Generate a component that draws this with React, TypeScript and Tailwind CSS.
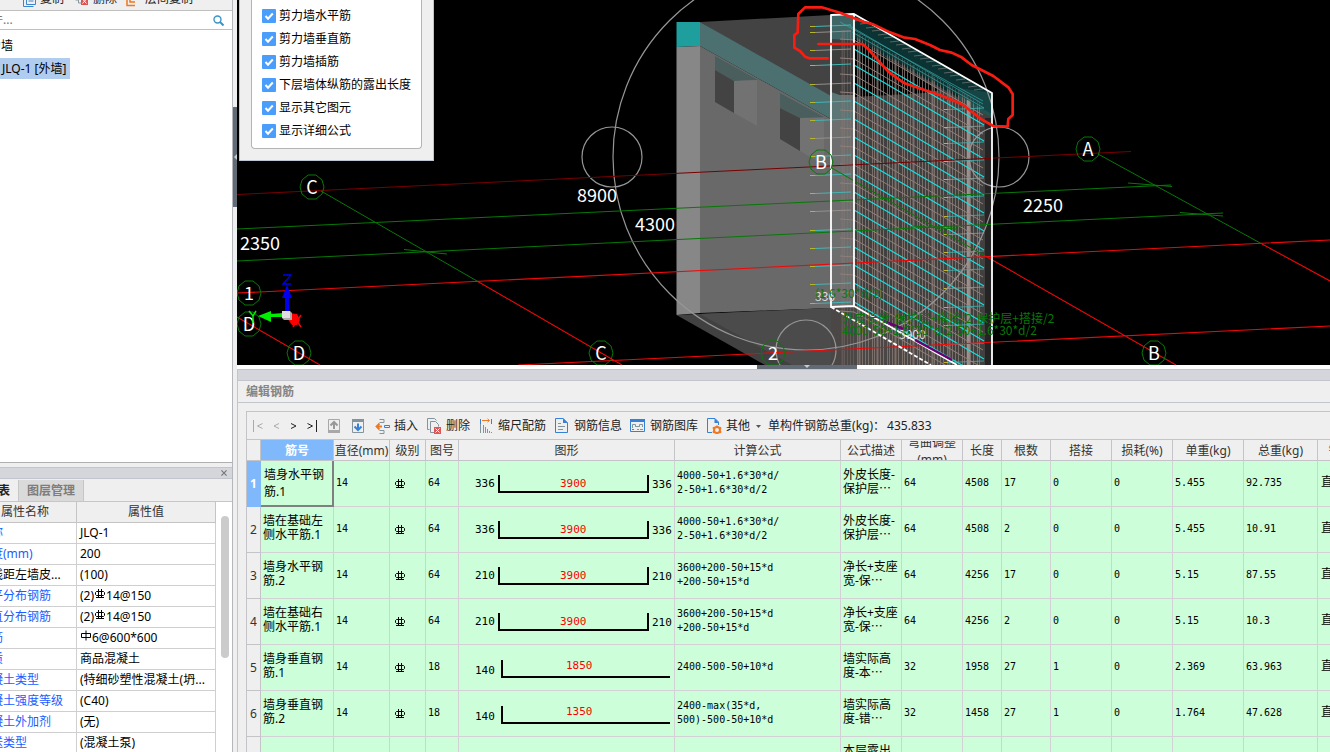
import React from "react";

const UI = "font-['Noto_Sans','Noto_Sans_CJK_SC',sans-serif]";
const MONO = "font-['DejaVu_Sans_Mono','Noto_Sans_CJK_SC',monospace]";

function RebarMark({ plain = false, className = "" }: { plain?: boolean; className?: string }) {
  return (
    <svg className={`inline-block h-3 w-[10px] shrink-0 ${className}`} viewBox="0 0 10 12" fill="none" stroke="#000">
      {plain ? (
        <path d="M.5 3.5h9v4h-9zM5 .5v10" />
      ) : (
        <path d="M1.5 3.5h7l1 1v2l-1 1h-7l-1-1v-2zM3.5 1v9M6.5 1v9M1 9.5h8" />
      )}
    </svg>
  );
}

const checks = ["剪力墙水平筋", "剪力墙垂直筋", "剪力墙插筋", "下层墙体纵筋的露出长度", "显示其它图元", "显示详细公式"];

function DisplayPopup() {
  return (
    <div className="absolute left-[2px] top-0 h-[161px] w-[195px] border border-t-0 border-[#bcc6d2] bg-[#efefef] px-[11px] pb-3">
      <div className="flex h-[149px] flex-col justify-end rounded-b border border-t-0 border-[#b4b4b4] bg-white pb-[6px] pl-[10px]">
        {checks.map((c) => (
          <label key={c} className="flex h-[23px] shrink-0 items-center gap-[3px] whitespace-nowrap text-xs text-black">
            <span className="relative block size-[14px]">
              <input type="checkbox" defaultChecked className="block size-[14px] appearance-none rounded-[1px] bg-[#4b9dfb]" />
              <svg className="pointer-events-none absolute inset-0 size-[14px]" viewBox="0 0 14 14" fill="none" stroke="#fff" strokeWidth="2">
                <path d="M3.5 7l2.5 2.7L10.8 4.5" />
              </svg>
            </span>
            {c}
          </label>
        ))}
      </div>
    </div>
  );
}

const leftBars = [26, 32, 50, 65, 84, 102, 120, 138, 156, 175, 193, 211, 230, 248, 266, 284, 303];
const grayBars = new Set([32, 50, 84, 138, 211]);
const rightBars = [109, 127, 143, 161, 179, 197, 216, 234, 252, 270, 288, 307, 325, 344, 362];
const stripes = Array.from({ length: 47 }, (_, i) => 841 + i * 3 + ((i * 7) % 5 === 0 ? 1 : 0));
const cyanStarts = [30, 49, 65, 83, 101, 119, 137, 155, 174, 192, 210, 229, 247, 265, 283, 302];

const labels: [string, number, number][] = [
  ["C", 312, 187], ["1", 249, 293], ["D", 249, 324], ["D", 299, 353], ["C", 601, 353],
  ["2", 773, 353], ["B", 821, 162], ["B", 1154, 353], ["A", 1088, 149],
];

function Scene() {
  return (
    <svg
      className="block h-full w-full bg-black font-['Noto_Sans_CJK_SC',sans-serif]"
      viewBox="237 0 1093 365"
      preserveAspectRatio="xMinYMin slice"
      fill="none"
    >
      <defs>
        <clipPath id="wallLines">
          <path d="M831 0H992V365H831z" />
        </clipPath>
      </defs>

      {/* room volume */}
      <path d="M700 22L831 15V100z" fill="#434343" />
      <path d="M700 46L831 119V308L700 313z" fill="#696969" />
      <path d="M676.500 22L700 22V46L676.500 47z" fill="#1f9e9e" />
      <path d="M700 22L831 96V119L700 46z" fill="#4c7070" />
      <path d="M676.500 47L700 46V313L676.500 315z" fill="#878787" />
      <path d="M676.500 315L831 308V365H765z" fill="#414141" />
      <path d="M700 314L831 308V365H792z" fill="#4b4b4b" />
      <path d="M715 56L758 80L734 81L715 70z" fill="#4a5e5e" />
      <path d="M715 70L734 81V113L715 102z" fill="#434343" />
      <path d="M734 81L757 80V126L734 113z" fill="#727272" />
      <path d="M780 93L824 117L800 118L780 108z" fill="#4a5e5e" />
      <path d="M780 108L800 118V151L780 139z" fill="#434343" />
      <path d="M800 118H824V165L800 151z" fill="#727272" />

      {/* wall body */}
      <path d="M831 15L854 14L992 93V365H831V307z" fill="#423f3f" />
      <path d="M831 15L854 14V306L831 307z" fill="#6e6e6e" />
      <path d="M831 15L854 14V40L831 39z" fill="#3f6666" />
      <path d="M831 39L854 40V95H831z" fill="#3d3d3d" />
      <path d="M831 92L854 100V120L831 119z" fill="#5c7575" />
      <path d="M854 38L940 90L925 93L854 97z" fill="#030303" />
      <path d="M831 308L854 306L957 365H831z" fill="#4c4747" />
      <path d="M854 14L992 93V117L854 38z" fill="#0b2b2b" />
      <path d="M958 88L992 93V118L958 99z" fill="#235252" />
      <path d="M985 118H992V365H985z" fill="#242424" />
      <g stroke="#8b7c76">
        {stripes.map((x, i) => (
          <path
            key={x}
            opacity={x < 854 ? 0.35 : 0.78}
            strokeWidth={i % 6 === 0 ? 2 : 1}
            d={`M${x + 0.5} ${Math.round(Math.max(30, 31 + (x - 854) * 0.57))}V365`}
          />
        ))}
      </g>
      <g clipPath="url(#wallLines)">
        <path d="M968.500 100V365" stroke="#a89c96" strokeWidth="3" opacity=".8" />
        <g stroke="#8f807b">
          {cyanStarts.map((y) => (
            <path key={y} d={`M840 ${y + 9}L854 ${y + 10}L983 ${y + 85}`} />
          ))}
        </g>
        <path d="M854 14L992 93V114L854 36z" fill="#0d3a3a" opacity=".55" />
        <g stroke="#16e0e0" strokeWidth="1.200">
          {cyanStarts.slice(1).map((y) => (
            <path key={y} d={`M854 ${y}L984 ${y + 76}`} />
          ))}
        </g>
        <g stroke="#3aa5a5" opacity=".7">
          <path d="M840 22L983 101M850 26L983 104M852 32L984 108" />
        </g>
        <g stroke="#8d8682">
          {Array.from({ length: 21 }, (_, i) => (
            <path key={i} opacity=".6" d={`M${854 + i * 6} ${21 + Math.round(i * 3.45)}l9 -1`} />
          ))}
        </g>
      </g>
      {leftBars.map((y) => (
        <g key={y}>
          <path d={`M810 ${y}.5h5`} stroke="#b5b52c" />
          <path d={`M815 ${y + 0.5}L851 ${y - 1}`} stroke={grayBars.has(y) ? "#958e8a" : "#45b5b5"} />
        </g>
      ))}
      {rightBars.map((y, i) => (
        <g key={y}>
          <path d={`M944 ${y}.5h4`} stroke="#c5b52c" />
          <path d={`M948 ${y + 0.5}L984 ${y - 1}`} opacity=".8" stroke={i % 3 === 1 ? "#8fa09e" : "#3fb2b2"} />
        </g>
      ))}

      {/* gizmo sphere */}
      <g stroke="#969696" strokeWidth="1.200">
        <circle cx="806" cy="157" r="193" />
        <circle cx="612" cy="157" r="30" />
        <circle cx="999" cy="157" r="30" />
        <circle cx="806" cy="350" r="30" />
      </g>

      {/* axes grid */}
      <path d="M237 194.500L1131 151.500" stroke="#780000" />
      <g stroke="#087808">
        <path d="M237 229L1171 185M237 261L1223 213" />
        <path d="M321 191L477 281M830 167L987 257M1098 154L1262 244" />
        <path d="M404 249.500L447 254M1128 183L1172 186.500M1180 212.500L1223 216M912 226L957 229" />
      </g>
      <g stroke="#ee0808" strokeWidth="1.100">
        <path d="M237 293L1330 240M518 365L1330 326M237 317L320 365M477 281L622 365M987 257L1176 365M1262 244L1330 281" />
      </g>

      {/* wall outline */}
      <g stroke="#fff" strokeWidth="1.800" strokeLinejoin="round">
        <path d="M831 307V15L854 14V306zM854 14L992 93V365M854 306L957 365" />
        <path d="M831 307L931 365" strokeDasharray="4 2" />
      </g>
      <path d="M884 321L903 329M915 340L952 360" stroke="#6b0070" strokeWidth="2.500" />

      {labels.map(([t, x, y]) => (
        <g key={`${t}${x}`}>
          <path
            transform={`translate(${x} ${y})`}
            d="M-4 -12H4L10 -7L12 0L10 7L4 12H-4L-10 7L-12 0L-10 -7z"
            stroke="#087808"
          />
          <text x={x} y={y + 7} textAnchor="middle" fontSize="18" fill="#fff">{t}</text>
        </g>
      ))}
      <g fill="#fff" fontSize="18">
        <text x="240" y="250">2350</text>
        <text x="577" y="202">8900</text>
        <text x="635" y="231">4300</text>
        <text x="1023" y="212">2250</text>
      </g>
      <g fontSize="12">
        <text x="815" y="301" fill="#ddd">336</text>
        <text x="899" y="339" fill="#ddd">3900</text>
      </g>
      <g fill="#087808" fontSize="12">
        <text x="815" y="298">(1.6*30*d/2)</text>
        <text x="842" y="323">外皮长度-保护层+搭接/2-保护层+搭接/2</text>
        <text x="842" y="335">4000-50+1.6*30*d/2-50+1.6*30*d/2</text>
      </g>

      {/* orientation triad */}
      <path d="M285 296h4v16h-4zM287 285l5 13h-10z" fill="#00e" />
      <path d="M270 314l14-1v4h-14zM258 316l13-5v11z" fill="#0e0" />
      <path d="M288 313l9 1 3 6-3 5h-5l-5-7z" fill="#f00" />
      <path d="M293 315l8 12M301 315l-8 12" stroke="#f00" strokeWidth="1.500" />
      <path d="M283 275h8l-8 9h8" stroke="#00e" strokeWidth="1.300" />
      <path d="M249 311l4 5 3-5M253 316v7" stroke="#0e0" strokeWidth="1.500" />
      <path d="M282 311h8v7h-8z" fill="#ddd" />
      <path d="M290 311l2 2v7h-8l-2-2h8z" fill="#aaa" />

      {/* freehand markup */}
      <path
        transform="translate(780 0) scale(.3333)"
        d="M143 175H88L75 170L60 153L43 143V105L53 98L55 42L75 22H125L180 38L250 65L280 73L330 97L370 112L405 117L450 135L480 150L515 158L545 172L575 195L640 228L685 262L698 282V345L685 357L683 380L640 378L605 358L545 312L480 285L440 272L370 248L325 215L265 148L247 132H115"
        stroke="#f91c10"
        strokeWidth="8"
        strokeLinecap="round"
        strokeLinejoin="round"
      />
    </svg>
  );
}

const propRows: [string, React.ReactNode, boolean?][] = [
  ["名称", "JLQ-1"],
  ["厚度(mm)", "200"],
  ["轴线距左墙皮...", "(100)", true],
  ["水平分布钢筋", <>(2)<RebarMark className="mx-px mb-1" />14@150</>],
  ["垂直分布钢筋", <>(2)<RebarMark className="mx-px mb-1" />14@150</>],
  ["拉筋", <><RebarMark plain className="mx-px mb-1" />6@600*600</>],
  ["材质", "商品混凝土"],
  ["混凝土类型", "(特细砂塑性混凝土(坍..."],
  ["混凝土强度等级", "(C40)"],
  ["混凝土外加剂", "(无)"],
  ["泵送类型", "(混凝土泵)"],
];

function LeftDock() {
  return (
    <aside className="flex w-[233px] shrink-0 justify-end overflow-hidden border-r border-[#b4b8be]">
      <div className="flex h-full w-[292px] shrink-0 flex-col">
        <div className="flex h-[10px] shrink-0 items-end overflow-hidden pb-[3px] pl-[24px] text-xs leading-4">
          <button className="w-[46px] text-left">新建▾</button>
          <button className="ml-[12px] flex shrink-0 items-end gap-1">
            <svg className="size-[14px]" viewBox="0 0 14 14" fill="none" stroke="#3d84cf"><path d="M4.500 .5h9v11h-9zM1.500 4v9.500h10M6.500 5h5M6.500 8h5" /></svg>
            复制
          </button>
          <button className="ml-[9px] flex shrink-0 items-end gap-1">
            <svg className="size-4" viewBox="0 0 16 16" fill="none" stroke="#8b959b"><path d="M2.500 1v8h3M5.500 3v9h4" /><path d="M8 6h7v8H8z" fill="#d95757" stroke="none" /><path d="M9.500 8l4 4.500M13.500 8l-4 4.500" stroke="#fff" /></svg>
            删除
          </button>
          <button className="ml-[9px] flex shrink-0 items-end gap-[9px]">
            <svg className="h-[14px] w-[10px]" viewBox="0 0 10 14" fill="none" stroke="#f07820" strokeWidth="1.500"><path d="M1 1v11.500h8M4 1v8h5" /></svg>
            层间复制
          </button>
        </div>
        <div className="flex h-5 shrink-0 items-center border-y border-[#bfbfbf] bg-white pr-2">
          <input
            aria-label="搜索构件"
            placeholder="搜索构件..."
            className="ml-[15px] min-w-0 flex-1 bg-transparent text-xs outline-none placeholder:text-[#777]"
          />
          <button aria-label="搜索">
            <svg className="size-[11px]" viewBox="0 0 11 11" fill="none" stroke="#3b93c9"><circle cx="4.500" cy="4.500" r="3.500" strokeWidth="1.400" /><path d="M7 7l3.500 3.500" strokeWidth="2" /></svg>
          </button>
        </div>
        <div className="flex min-h-0 flex-1 flex-col items-start border-b border-[#b0b0b0] bg-white pl-[37px] pt-1 text-xs text-black">
          <div className="flex h-6 items-center">剪力墙</div>
          <button className="ml-[17px] flex h-[21px] items-center bg-[#b0cdef] pl-2 pr-1">JLQ-1 [外墙]</button>
        </div>

        <section className="mt-1 flex h-[285px] shrink-0 flex-col border-t border-[#c2c6cc]">
          <div className="flex h-[11px] shrink-0 items-center justify-end border-b border-[#c2c6cc] bg-[#d4d6db] pr-[5px]">
            <button aria-label="关闭">
              <svg className="size-[6px]" viewBox="0 0 7 7" stroke="#777" strokeWidth="1.400"><path d="M.5 .5l6 6M6.500 .5l-6 6" /></svg>
            </button>
          </div>
          <div className="flex h-[23px] shrink-0 border-b border-[#c6c6c6] pt-px text-xs font-bold">
            <button className="w-[78px] pr-2 text-right text-[#222]">属性列表</button>
            <button className="border-x border-[#c6c6c6] bg-[#dadada] px-2 text-[#7d7d7d]">图层管理</button>
          </div>
          <div className="flex min-h-0 flex-1 items-start overflow-hidden bg-white">
            <table className="w-[276px] table-fixed border-separate border-spacing-0 whitespace-nowrap text-xs">
              <colgroup>
                <col className="w-[34px]" />
                <col className="w-[103px]" />
                <col />
              </colgroup>
              <thead>
                <tr className="h-[21px] bg-[#efefef] text-[#333]">
                  <th className="border-b border-r border-[#c4c4c4] p-0" />
                  <th className="border-b border-r border-[#c4c4c4] p-0 font-normal">属性名称</th>
                  <th className="border-b border-r border-[#c4c4c4] p-0 font-normal">属性值</th>
                </tr>
              </thead>
              <tbody>
                {propRows.map(([name, value, plain], i) => (
                  <tr key={name} className="h-[21px]">
                    <td className="border-b border-r border-[#cfcfcf] bg-[#efefef] p-0 text-center">{i + 1}</td>
                    <td className={`overflow-hidden border-b border-r border-[#cfcfcf] py-0 pl-[5px] pr-0 leading-4 ${plain ? "text-black" : "text-[#1a5cff]"}`}>{name}</td>
                    <td className="overflow-hidden border-b border-r border-[#cfcfcf] py-0 pl-[3px] pr-0 leading-4 text-black">
                      <span className="flex items-center">{value}</span>
                    </td>
                  </tr>
                ))}
              </tbody>
            </table>
            <div className="ml-[5px] mt-[14px] h-[142px] w-2 rounded-full bg-[#cbcbcb]" />
          </div>
        </section>
      </div>
    </aside>
  );
}

type Bar = { name: string[]; no: string; left: string; mid: string; right?: string; formula: string[]; desc: string[]; adj: string; len: string; count: string; lap: string; unit: string; total: string };

const bars: Bar[] = [
  { name: ["墙身水平钢", "筋.1"], no: "64", left: "336", mid: "3900", right: "336", formula: ["4000-50+1.6*30*d/", "2-50+1.6*30*d/2"], desc: ["外皮长度-", "保护层⋯"], adj: "64", len: "4508", count: "17", lap: "0", unit: "5.455", total: "92.735" },
  { name: ["墙在基础左", "侧水平筋.1"], no: "64", left: "336", mid: "3900", right: "336", formula: ["4000-50+1.6*30*d/", "2-50+1.6*30*d/2"], desc: ["外皮长度-", "保护层⋯"], adj: "64", len: "4508", count: "2", lap: "0", unit: "5.455", total: "10.91" },
  { name: ["墙身水平钢", "筋.2"], no: "64", left: "210", mid: "3900", right: "210", formula: ["3600+200-50+15*d", "+200-50+15*d"], desc: ["净长+支座", "宽-保⋯"], adj: "64", len: "4256", count: "17", lap: "0", unit: "5.15", total: "87.55" },
  { name: ["墙在基础右", "侧水平筋.1"], no: "64", left: "210", mid: "3900", right: "210", formula: ["3600+200-50+15*d", "+200-50+15*d"], desc: ["净长+支座", "宽-保⋯"], adj: "64", len: "4256", count: "2", lap: "0", unit: "5.15", total: "10.3" },
  { name: ["墙身垂直钢", "筋.1"], no: "18", left: "140", mid: "1850", formula: ["2400-500-50+10*d"], desc: ["墙实际高", "度-本⋯"], adj: "32", len: "1958", count: "27", lap: "1", unit: "2.369", total: "63.963" },
  { name: ["墙身垂直钢", "筋.2"], no: "18", left: "140", mid: "1350", formula: ["2400-max(35*d,", "500)-500-50+10*d"], desc: ["墙实际高", "度-错⋯"], adj: "32", len: "1458", count: "27", lap: "1", unit: "1.764", total: "47.628" },
];

function BarShape({ left, mid, right }: { left: string; mid: string; right?: string }) {
  return (
    <svg className={`block h-[45px] w-[215px] ${MONO}`} viewBox="0 0 215 45" fontSize="11">
      {right ? (
        <path d="M40 14V31H189V14" fill="none" stroke="#000" strokeWidth="2" />
      ) : (
        <path d="M43 15V32H211" fill="none" stroke="#000" strokeWidth="2" />
      )}
      <text x="16" y={right ? 26 : 29}>{left}</text>
      <text x={right ? 101 : 107} y={right ? 26 : 24} fill="#f00">{mid}</text>
      {right && <text x="193" y="27">{right}</text>}
    </svg>
  );
}

const head = "h-[21px] border-b border-r border-[#c4c4c8] bg-[#efefef] px-0 pb-0 pt-px font-normal leading-4 overflow-hidden";
const cell = "h-[46px] border-b border-r border-[#d3d0d6] py-0 pl-[2px] pr-0 overflow-hidden";
const num = `${cell} pb-px text-[10px] ${MONO}`;
const pair = `${cell} text-xs leading-[14px]`;

function Lines({ items }: { items: string[] }) {
  return <>{items.map((t) => <div key={t}>{t}</div>)}</>;
}

function BarTable() {
  return (
    <table className="w-[1141px] shrink-0 table-fixed border-separate border-spacing-0 whitespace-nowrap text-xs text-black">
      <colgroup>
        <col className="w-[14px]" /><col className="w-[73px]" /><col className="w-[56px]" /><col className="w-[36px]" />
        <col className="w-[33px]" /><col className="w-[216px]" /><col className="w-[166px]" /><col className="w-[61px]" />
        <col className="w-[61px]" /><col className="w-[39px]" /><col className="w-[49px]" /><col className="w-[61px]" />
        <col className="w-[61px]" /><col className="w-[71px]" /><col className="w-[74px]" /><col className="w-[70px]" />
      </colgroup>
      <thead>
        <tr className="text-[#333]">
          <th className={head} />
          <th className="h-[21px] border-b border-r border-[#c4c4c8] bg-[#7fb9fb] px-0 pb-0 pt-px font-bold leading-4 text-white">筋号</th>
          <th className={head}>直径(mm)</th>
          <th className={head}>级别</th>
          <th className={head}>图号</th>
          <th className={head}>图形</th>
          <th className={head}>计算公式</th>
          <th className={head}>公式描述</th>
          <th className={head}>
            <div className="flex h-[19px] flex-col justify-center overflow-hidden leading-[17px]"><span>弯曲调整</span><span>(mm)</span></div>
          </th>
          {["长度", "根数", "搭接", "损耗(%)", "单重(kg)", "总重(kg)", "钢筋归类"].map((h) => (
            <th key={h} className={head}>{h}</th>
          ))}
        </tr>
      </thead>
      <tbody className="bg-[#ccffd9]">
        {bars.map((b, i) => (
          <tr key={i}>
            <th className={i === 0 ? "border-b border-r border-[#7fb9fb] bg-[#7fb9fb] p-0 text-white" : "border-b border-r border-[#c4c4c8] bg-[#efefef] p-0 font-normal text-[#333]"}>{i + 1}</th>
            {i === 0 ? (
              <td className="h-[46px] border-b-2 border-r-2 border-[#808080] py-0 pl-[3px] pr-0 leading-[17px]"><Lines items={b.name} /></td>
            ) : (
              <td className={`${pair} pb-[3px]`}><Lines items={b.name} /></td>
            )}
            <td className={num}>14</td>
            <td className={`${cell} pl-[5px]`}><RebarMark className="block" /></td>
            <td className={num}>{b.no}</td>
            <td className="h-[46px] border-b border-r border-[#d3d0d6] p-0"><BarShape left={b.left} mid={b.mid} right={b.right} /></td>
            <td className={`${num} leading-[14px]`}><Lines items={b.formula} /></td>
            <td className={`${pair} pb-[3px]`}><Lines items={b.desc} /></td>
            <td className={num}>{b.adj}</td>
            <td className={num}>{b.len}</td>
            <td className={num}>{b.count}</td>
            <td className={num}>{b.lap}</td>
            <td className={num}>0</td>
            <td className={num}>{b.unit}</td>
            <td className={num}>{b.total}</td>
            <td className={`${pair} pb-[3px]`}><span className="pl-px">直筋</span></td>
          </tr>
        ))}
        <tr>
          <th className="border-b border-r border-[#c4c4c8] bg-[#efefef] p-0 font-normal text-[#333]">7</th>
          {Array.from({ length: 15 }, (_, i) => (
            <td key={i} className={`${pair} pb-[3px]`}>{i === 6 && <Lines items={["本层露出", "长度+搭⋯"]} />}</td>
          ))}
        </tr>
      </tbody>
    </table>
  );
}

function ToolButton({ label, children }: { label: string; children: React.ReactNode }) {
  return (
    <button className="flex items-center gap-1">
      <svg className="size-4" viewBox="0 0 16 16" fill="none">{children}</svg>
      {label}
    </button>
  );
}

function Toolbar() {
  return (
    <div className="flex h-[28px] shrink-0 items-center whitespace-nowrap border-b border-[#c4c4c8] pt-px text-xs text-[#222]">
      <div className="flex w-[127px] shrink-0 items-center pl-[5px]">
        <button aria-label="第一条" className="w-[21px]"><svg className="h-3 w-[11px]" viewBox="0 0 11 12" fill="none" stroke="#aaa"><path d="M1.500 0v12M10.500 3.500L5.500 6l5 2.500" /></svg></button>
        <button aria-label="上一条" className="w-[17px]"><svg className="h-3 w-[7px]" viewBox="0 0 7 12" fill="none" stroke="#aaa"><path d="M6 3.500L1 6l5 2.500" /></svg></button>
        <button aria-label="下一条" className="w-[17px]"><svg className="h-3 w-[7px]" viewBox="0 0 7 12" fill="none" stroke="#222"><path d="M1 3.500L6 6 1 8.500" /></svg></button>
        <button aria-label="最后一条" className="w-[21px]"><svg className="h-3 w-[11px]" viewBox="0 0 11 12" fill="none" stroke="#222"><path d="M.5 3.500l5 2.500-5 2.500M9.500 0v12" /></svg></button>
        <button aria-label="上移" className="w-[24px]">
          <svg className="h-[14px] w-3" viewBox="0 0 12 14" fill="none"><path d="M.5 .5h11v13H.5z" stroke="#a8a8a8" /><path d="M0 11h12v3H0z" fill="#a8a8a8" /><path d="M6 10V4M2.500 6.500L6 3l3.500 3.500" stroke="#999" strokeWidth="2" /></svg>
        </button>
        <button aria-label="下移">
          <svg className="h-[14px] w-3" viewBox="0 0 12 14" fill="none"><path d="M.5 .5h11v13H.5z" stroke="#84949c" /><path d="M0 0h12v3H0z" fill="#84949c" /><path d="M6 4.500v6M2.500 7.500L6 11l3.500-3.500" stroke="#3581d8" strokeWidth="2" /></svg>
        </button>
      </div>
      <div className="flex shrink-0 items-center gap-2">
        <ToolButton label="插入">
          <path d="M5.500 1.500H10v3H5.500M5.500 12.500H10v3H5.500" stroke="#84949c" />
          <path d="M3 8.500h5M5.500 5.500L2.500 8.500l3 3" stroke="#f07820" strokeWidth="1.800" />
          <path d="M10.500 7.500h5v2h-5z" stroke="#3581d8" />
        </ToolButton>
        <ToolButton label="删除">
          <path d="M3.500 11.500h-2v-11h7l2 2M8 14.500H4.500v-11h5l3 3v2" stroke="#84949c" />
          <path d="M8 9h7v7H8z" fill="#d95757" /><path d="M9.500 10.500l4 4M13.500 10.500l-4 4" stroke="#fff" />
        </ToolButton>
        <ToolButton label="缩尺配筋">
          <path d="M2.500 1v5M13.500 1v5" stroke="#3581d8" /><path d="M4 2.500h7M9.500 .8l2 1.700-2 1.700" stroke="#f07820" />
          <path d="M2.500 6v9M5.500 7v8M7.500 9v6M9.500 11v4M11.500 13v2M13.500 14v1" stroke="#84949c" />
        </ToolButton>
        <ToolButton label="钢筋信息">
          <path d="M1.500 14.500V.5H9L13.500 5v9.500z" stroke="#3581d8" /><path d="M9 0v5h5z" fill="#3581d8" /><path d="M4 5.500h3M4 8.500h7M4 11.500h5" stroke="#84949c" />
        </ToolButton>
        <ToolButton label="钢筋图库">
          <path d="M.5 1.500h14v12H.5z" stroke="#3581d8" /><path d="M0 1h15v3H0z" fill="#3581d8" />
          <path d="M2.500 10V6.500h3v2h4v-2h3V9M5.500 8.500h4" stroke="#84949c" /><path d="M2 11.500h2" stroke="#3c9b55" /><path d="M7 11.500h2" stroke="#84949c" /><path d="M10 11.500h3" stroke="#f07820" />
        </ToolButton>
        <ToolButton label="其他">
          <path d="M6 14.500H1.500V.5H9L12.500 4v3" stroke="#3581d8" /><path d="M8.500 0v5h4.500z" fill="#3581d8" />
          <circle cx="11" cy="12" r="3" stroke="#f07820" strokeWidth="2" /><path d="M11 7.500v2M11 14.500v1.500M6.800 9.500l1.700 1M13.500 13.500l1.700 1M6.800 14.500l1.700-1M13.500 10.500l1.700-1" stroke="#f07820" strokeWidth="1.800" />
        </ToolButton>
      </div>
      <svg className="ml-1.5 mr-[7px] h-[3px] w-[5px] shrink-0" viewBox="0 0 5 3" fill="#555"><path d="M0 0h5L2.500 3z" /></svg>
      <span>单构件钢筋总重(kg)：</span>
      <span className="pl-[2px]">435.833</span>
    </div>
  );
}

export default function App() {
  return (
    <div className={`flex h-screen w-full overflow-hidden bg-[#efefef] text-[#222] ${UI}`}>
      <LeftDock />
      <div className="w-1 shrink-0 pt-[107px]">
        <div className="flex h-[100px] items-center bg-[#616a75]">
          <svg className="h-[6px] w-1" viewBox="0 0 4 6" fill="#c8cdd2"><path d="M4 0v6L1 3z" /></svg>
        </div>
      </div>
      <main className="flex min-w-0 flex-1 flex-col">
        <div className="relative h-[365px] shrink-0 overflow-hidden">
          <Scene />
          <DisplayPopup />
        </div>
        <div className="h-1 shrink-0 bg-white pl-[520px]">
          <div className="flex h-1 w-[100px] justify-center bg-[#616a75]">
            <svg className="h-[3px] w-[6px]" viewBox="0 0 6 3" fill="#c8cdd2"><path d="M0 0h6L3 3z" /></svg>
          </div>
        </div>
        <section className="flex min-h-0 flex-1 flex-col border-l border-t border-[#c2c6cc]">
          <div className="h-[11px] shrink-0 border-b border-[#c2c6cc] bg-[#d4d6db]" />
          <h2 className="flex h-[22px] shrink-0 items-center border-b border-[#c2c6cc] pl-2 pt-px text-xs font-bold text-[#858585]">编辑钢筋</h2>
          <div className="ml-2 mt-2 flex min-h-0 flex-1 flex-col overflow-hidden border-l border-t border-[#c4c4c8]">
            <Toolbar />
            <BarTable />
          </div>
        </section>
      </main>
    </div>
  );
}
